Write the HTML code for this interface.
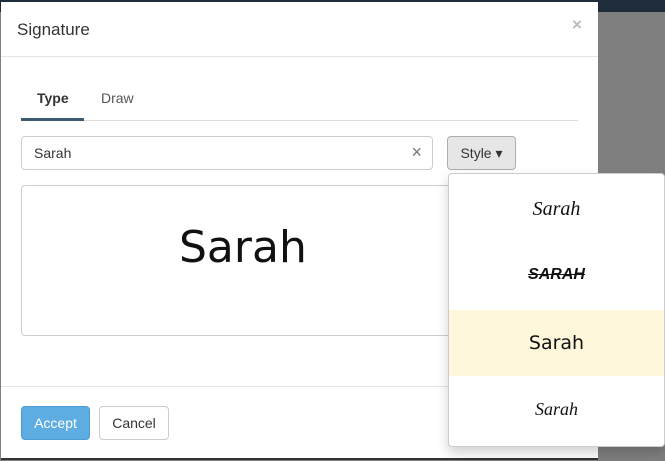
<!DOCTYPE html>
<html><head><style>
body{margin:0;width:665px;height:461px;overflow:hidden;background:#7f7f7f;font-family:"Liberation Sans",sans-serif;position:relative}
.top{position:absolute;left:0;top:0;width:665px;height:12px;background:#1f2d3a}
.modal{position:absolute;left:1px;top:2px;width:597px;height:456px;background:#fff;border-bottom:2px solid #333}
.title{position:absolute;left:16px;top:18px;font-size:17px;color:#333}
.close{position:absolute;left:571px;top:13px;font-size:17px;color:#bbb;font-weight:bold}
.hr{position:absolute;height:1px;background:#e5e5e5}
.tab{position:absolute;top:88px;font-size:14px}
.inp{position:absolute;left:20px;top:134px;width:410px;height:32px;border:1px solid #ccc;border-radius:4px;font-size:14px;color:#333}
.btn{position:absolute;border-radius:4px;font-size:14px;text-align:center;box-sizing:border-box}
.prev{position:absolute;left:20px;top:183px;width:500px;height:149px;border:1px solid #ccc;border-radius:4px}
.dd{position:absolute;left:448px;top:173px;width:215px;height:272px;background:#fff;border:1px solid #ccc;border-radius:4px;box-shadow:0 6px 12px rgba(0,0,0,.18)}
.it{position:absolute;left:0;width:215px;height:66px;text-align:center;line-height:66px;font-style:italic;color:#111}
</style></head><body>
<div class="top"></div>
<div class="modal">
<div class="title">Signature</div>
<div class="close">×</div>
<div class="hr" style="left:0;top:54px;width:597px"></div>
<div class="tab" style="left:36px;font-weight:bold;color:#333">Type</div>
<div class="tab" style="left:100px;color:#555">Draw</div>
<div class="hr" style="left:20px;top:118px;width:557px;background:#ddd"></div>
<div style="position:absolute;left:20px;top:116px;width:63px;height:3px;background:#3d5a73"></div>
<div class="inp"><span style="position:absolute;left:12px;top:8px">Sarah</span><span style="position:absolute;right:10px;top:5px;font-size:18px;color:#777">×</span></div>
<div class="btn" style="left:446px;top:134px;width:69px;height:34px;background:#e6e6e6;border:1px solid #adadad;line-height:32px;color:#333">Style ▾</div>
<div class="prev"><div style="position:absolute;left:157px;top:36px;font-size:44px;font-family:'DejaVu Sans',sans-serif;font-weight:normal;color:#111">Sarah</div></div>
<div class="hr" style="left:0;top:384px;width:597px"></div>
<div class="btn" style="left:20px;top:404px;width:69px;height:34px;background:#5dade2;border:1px solid #4a9dd4;color:#fff;line-height:32px">Accept</div>
<div class="btn" style="left:98px;top:404px;width:70px;height:34px;background:#fff;border:1px solid #ccc;color:#333;line-height:32px">Cancel</div>
</div>
<div class="dd">
<div class="it" style="top:2px;font-family:'Liberation Serif',serif;font-size:20px">Sarah</div>
<div class="it" style="top:68px;font-family:'Liberation Sans',sans-serif;font-size:16px;font-weight:bold;text-decoration:line-through">SARAH</div>
<div class="it" style="top:136px;background:#fef7dc;font-family:'DejaVu Sans',sans-serif;font-size:19px;font-style:normal">Sarah</div>
<div class="it" style="top:202px;font-family:'Liberation Serif',serif;font-size:18px">Sarah</div>
</div>
</body></html>
